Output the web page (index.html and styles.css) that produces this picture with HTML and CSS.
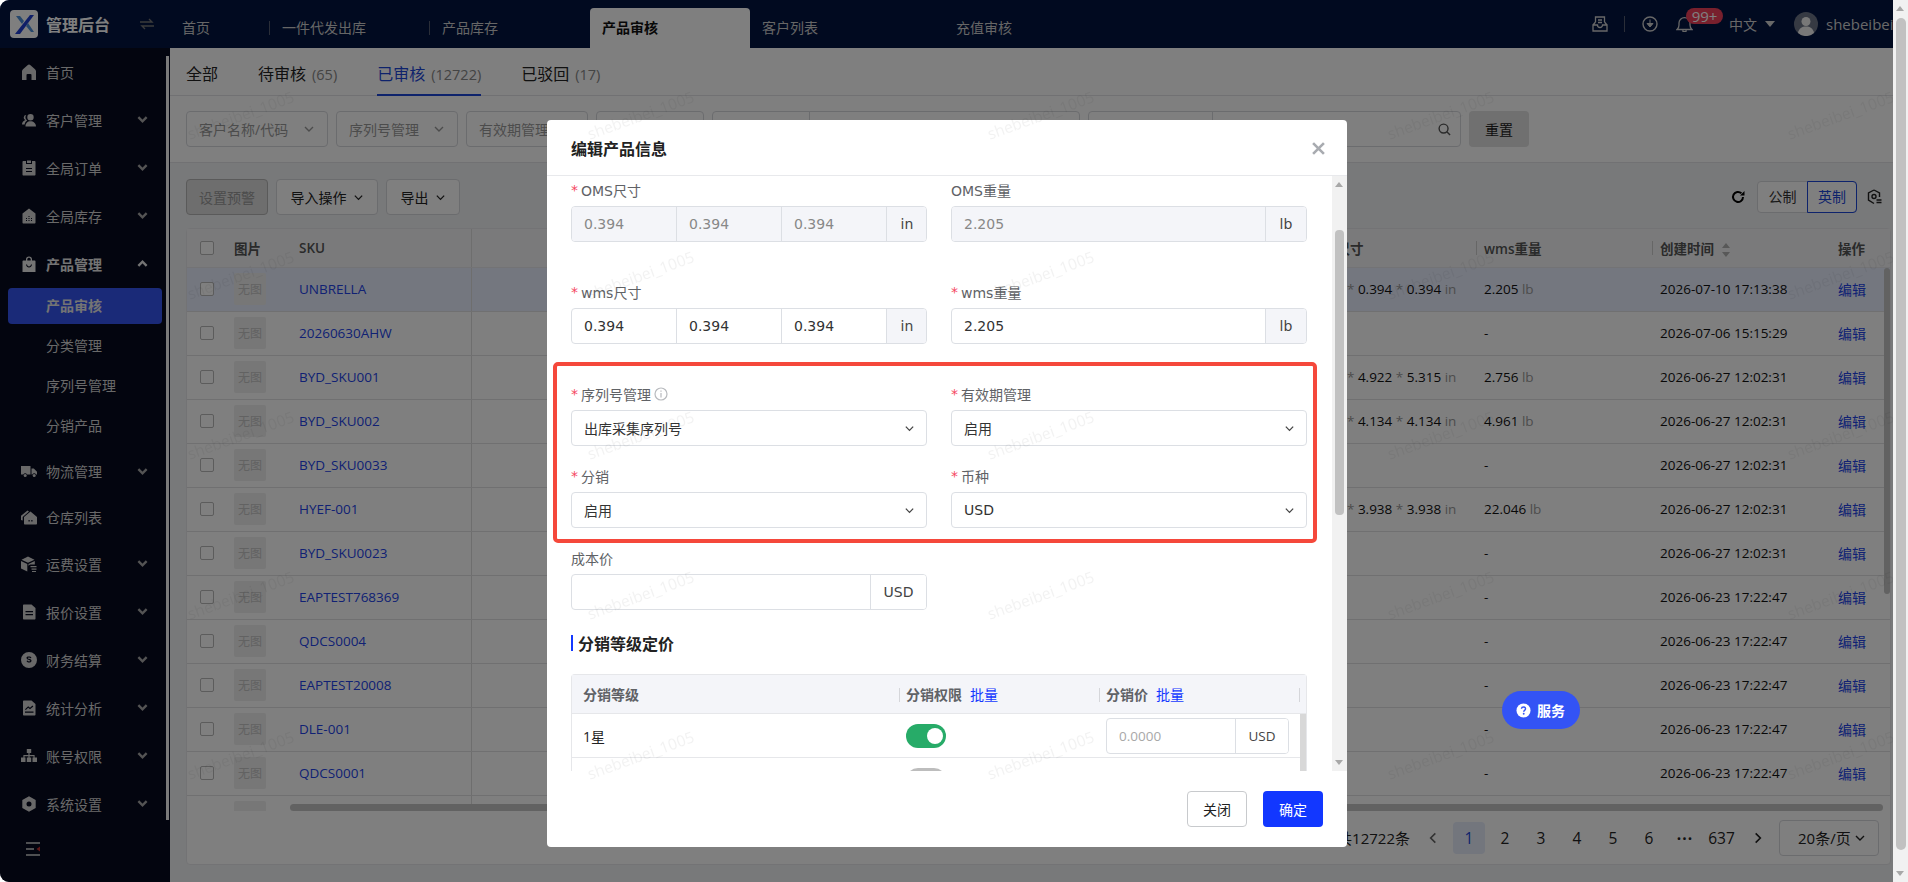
FILE: index.html
```html
<!DOCTYPE html>
<html lang="zh-CN">

<head>
    <meta charset="UTF-8">
    <meta name="viewport" content="width=device-width, initial-scale=1.0">
    <title>管理后台</title>
    <link rel="stylesheet" href="styles.css">
</head>

<body>
    <svg class="sprite" xmlns="http://www.w3.org/2000/svg">
        <symbol id="chev" viewBox="0 0 12 12"><path d="M2 4l4 4 4-4" fill="none" stroke="currentColor" stroke-width="1.4"/></symbol>
        <symbol id="chev-bold" viewBox="0 0 12 12"><path d="M1.5 3.5L6 8l4.5-4.5" fill="none" stroke="currentColor" stroke-width="2.6"/></symbol>
        <symbol id="i-home" viewBox="0 0 16 16"><path d="M8 .5c.5 0 1 .3 1.500.7l4.500 4c.6.5 1 1.200 1 2V16h-4.500v-5a1 1 0 0 0-1-1h-3a1 1 0 0 0-1 1v5H1V7.200c0-.8.4-1.500 1-2l4.500-4C7 .8 7.500.5 8 .5z"/></symbol>
        <symbol id="i-user" viewBox="0 0 16 16"><path d="M9.500 2a3.200 3.200 0 1 1 0 6.400 3.200 3.200 0 0 1 0-6.400zM4.500 14.500c0-3.200 2-5.200 5-5.200s5.500 2 5.500 5.200zM5.200 3a2.500 2.500 0 0 0-.7 4.900C2.300 8.600 1 10.300 1 12.500h2.600c.3-1.800 1.200-3.100 2.600-3.900A4.300 4.300 0 0 1 5.200 3z"/></symbol>
        <symbol id="i-order" viewBox="0 0 16 16"><path fill-rule="evenodd" d="M2.500 1H5v3h6V1h2.500c.6 0 1 .4 1 1v12.500c0 .6-.4 1-1 1h-11c-.6 0-1-.4-1-1V2c0-.6.4-1 1-1zM5 8v1h6V8zm0 3v1h6v-1zM6 .5h4V3H6z"/></symbol>
        <symbol id="i-stock" viewBox="0 0 16 16"><path fill-rule="evenodd" d="M8 .5l6.500 5v9c0 .6-.4 1-1 1h-11c-.6 0-1-.4-1-1v-9zM5 10v1h1v-1zm2.500 0v1h1v-1zm2.500 0v1h1v-1zm-5 2v1h1v-1zm2.500 0v1h1v-1zm2.500 0v1h1v-1zM7.500 8v1h1V8z"/></symbol>
        <symbol id="i-bag" viewBox="0 0 16 16"><path fill-rule="evenodd" d="M5 4.500V3.200C5 1.600 6.300.5 8 .5s3 1.100 3 2.700v1.300h2.500c.6 0 1 .4 1 1V16h-13V5.500c0-.6.4-1 1-1zm1.300 0h3.400V3.200c0-.9-.8-1.500-1.700-1.500s-1.700.6-1.700 1.500zM5 8.500c.3 2 1.500 3 3 3s2.700-1 3-3h-1c-.3 1.300-1 2-2 2s-1.700-.7-2-2z"/></symbol>
        <symbol id="i-truck" viewBox="0 0 16 16"><path d="M0 3h9.500v8.500H6a2 2 0 0 0-3.600 0H0zM10.500 5.500h2.300L16 8.700v2.800h-1a2 2 0 0 0-3.600 0h-.9z"/><circle cx="4.200" cy="12.500" r="1.500"/><circle cx="13.200" cy="12.500" r="1.500"/></symbol>
        <symbol id="i-ware" viewBox="0 0 16 16"><path fill-rule="evenodd" d="M9.500 2.500L16 8v6.500c0 .6-.4 1-1 1H4c-.6 0-1-.4-1-1V8zM7.500 11v1.500h1.200V11zm2.800 0v1.500h1.200V11z"/><path d="M6.500 1.500L8 2.600 1.700 8v3.500L0 11V6.800z"/></symbol>
        <symbol id="i-box" viewBox="0 0 16 16"><path d="M7 .5l6.500 3.200-6.500 3L.5 3.700zM0 5l6.300 3v7.500L0 12.500zM13.800 5v3.500H9.500a2 2 0 0 0-2 1.500V8z"/><path d="M9.500 10h6v1.300h-6zM10.500 12.500h5v1.300h-5zM11 15h4v1h-4z"/></symbol>
        <symbol id="i-doc" viewBox="0 0 16 16"><path fill-rule="evenodd" d="M2 1.500c0-.6.4-1 1-1h7.500L14.500 4v10.500c0 .6-.4 1-1 1H3c-.6 0-1-.4-1-1zM4.500 7v1.200h7.500V7zm0 3v1.200h7.500V10z"/></symbol>
        <symbol id="i-coin" viewBox="0 0 16 16"><path fill-rule="evenodd" d="M8 0a8 8 0 1 1 0 16A8 8 0 0 1 8 0zM5.500 5.800C5.500 7 6.500 7.600 8 8c1 .3 1.200.5 1.200.8 0 .4-.5.600-1.200.6s-1.200-.3-1.400-.8L5.500 9c.3.900 1.100 1.500 2.500 1.500 1.700 0 2.500-.7 2.500-1.800S9.500 7.200 8 6.800c-.9-.2-1.200-.4-1.200-.8 0-.3.500-.5 1.200-.5s1.100.2 1.300.7l1.100-.3C10.100 5 9.300 4.500 8 4.500c-1.600 0-2.500.5-2.500 1.300z"/></symbol>
        <symbol id="i-chart" viewBox="0 0 16 16"><path fill-rule="evenodd" d="M2 1.500c0-.6.4-1 1-1h7.500L14.500 4v10.500c0 .6-.4 1-1 1H3c-.6 0-1-.4-1-1zM4 11.500v1.200h8.500v-1.200zm0-2.200l.8.8 2.400-2.300 1.800 1.500 3.300-2.900-.8-.9-2.500 2.200-1.800-1.500z"/></symbol>
        <symbol id="i-tree" viewBox="0 0 16 16"><path d="M5.800 1h4.400v4H8.600v2h5v2.500H16V14h-4.500V9.500h1V8.300H8.600v1.200h1.600V14H5.800V9.500h1.600V8.300H3.500v1.200h1V14H0V9.500h2.400V7h5V5H5.800z"/></symbol>
        <symbol id="i-gear" viewBox="0 0 16 16"><path fill-rule="evenodd" d="M8 .3l6.700 3.800v7.800L8 15.700l-6.700-3.800V4.100zM8 5.500a2.500 2.500 0 1 0 0 5 2.500 2.500 0 0 0 0-5z"/></symbol>
    </svg>

    <div class="app">
        <header class="topbar">
            <div class="brand">
                <svg class="logo" viewBox="0 0 28 28">
                    <rect width="28" height="28" rx="4" fill="#fff"/>
                    <path d="M5 24L20 5h4L10 24z" fill="#1f3fd0"/>
                    <path d="M6 6h4l4 5-2 3z" fill="#4d8fd8"/>
                    <path d="M16 16l2-3 6 9h-3z" fill="#4d8fd8"/>
                </svg>
                <span class="brand-name">管理后台</span>
                <svg class="swap" viewBox="0 0 14 12"><path d="M0 4h12L9 1M14 8H2l3 3" fill="none" stroke="currentColor" stroke-width="1.400"/></svg>
            </div>
            <nav class="tabs">
                <a class="tab tab-s">首页</a>
                <a class="tab">一件代发出库</a>
                <a class="tab">产品库存</a>
                <a class="tab active">产品审核</a>
                <a class="tab tab-l">客户列表</a>
                <a class="tab">充值审核</a>
            </nav>
            <div class="top-right">
                <svg class="ti" viewBox="0 0 16 16"><path d="M3.500 6V1h9v5M1 9v6h14V9h-4.500a2.500 2.500 0 0 1-5 0zM1 9l2.500-3M15 9l-2.500-3M6 4h4M6 6.500h4" fill="none" stroke="currentColor" stroke-width="1.300"/></svg>
                <i class="top-sep"></i>
                <svg class="ti ti-dl" viewBox="0 0 16 16"><circle cx="8" cy="8" r="7" fill="none" stroke="currentColor" stroke-width="1.400"/><path d="M8 3.500v5.500M5 7.500l3 3.500 3-3.500z" fill="currentColor" stroke="currentColor"/></svg>
                <span class="bell">
                    <svg class="ti" viewBox="0 0 17 16"><path d="M1 13.500h15c-1.500-1-2-2.500-2-4.500V7c0-3-2.400-5.300-5.500-5.300S3 4 3 7v2c0 2-.5 3.500-2 4.500zM6.500 14.500c.3 1 1 1.200 2 1.200s1.700-.2 2-1.200" fill="none" stroke="currentColor" stroke-width="1.300"/></svg>
                    <b class="badge">99+</b>
                </span>
                <span class="lang">中文</span>
                <i class="caret"></i>
                <svg class="avatar" viewBox="0 0 24 24">
                    <circle cx="12" cy="12" r="12" fill="#6c7486"/>
                    <circle cx="12" cy="9.500" r="4.500" fill="#f0f0f0"/>
                    <path d="M4 21c1-5 4-6.500 8-6.500s7 1.500 8 6.500a12 12 0 0 1-16 0z" fill="#f0f0f0"/>
                </svg>
                <span class="uname">shebeibei</span>
            </div>
        </header>

        <div class="layout">
            <aside class="sidebar">
                <a class="side-item"><svg class="si"><use href="#i-home"/></svg>首页</a>
                <a class="side-item"><svg class="si"><use href="#i-user"/></svg>客户管理<svg class="sc"><use href="#chev-bold"/></svg></a>
                <a class="side-item"><svg class="si"><use href="#i-order"/></svg>全局订单<svg class="sc"><use href="#chev-bold"/></svg></a>
                <a class="side-item"><svg class="si"><use href="#i-stock"/></svg>全局库存<svg class="sc"><use href="#chev-bold"/></svg></a>
                <a class="side-item open"><svg class="si"><use href="#i-bag"/></svg>产品管理<svg class="sc up"><use href="#chev-bold"/></svg></a>
                <div class="side-sub">
                    <a class="sub-item active">产品审核</a>
                    <a class="sub-item">分类管理</a>
                    <a class="sub-item">序列号管理</a>
                    <a class="sub-item">分销产品</a>
                </div>
                <a class="side-item short"><svg class="si"><use href="#i-truck"/></svg>物流管理<svg class="sc"><use href="#chev-bold"/></svg></a>
                <a class="side-item short"><svg class="si"><use href="#i-ware"/></svg>仓库列表</a>
                <a class="side-item"><svg class="si"><use href="#i-box"/></svg>运费设置<svg class="sc"><use href="#chev-bold"/></svg></a>
                <a class="side-item"><svg class="si"><use href="#i-doc"/></svg>报价设置<svg class="sc"><use href="#chev-bold"/></svg></a>
                <a class="side-item"><svg class="si"><use href="#i-coin"/></svg>财务结算<svg class="sc"><use href="#chev-bold"/></svg></a>
                <a class="side-item"><svg class="si"><use href="#i-chart"/></svg>统计分析<svg class="sc"><use href="#chev-bold"/></svg></a>
                <a class="side-item"><svg class="si"><use href="#i-tree"/></svg>账号权限<svg class="sc"><use href="#chev-bold"/></svg></a>
                <a class="side-item"><svg class="si"><use href="#i-gear"/></svg>系统设置<svg class="sc"><use href="#chev-bold"/></svg></a>
                <svg class="collapse" viewBox="0 0 14 14"><path d="M0 1h14M0 13h14M0 7h8" stroke="currentColor" stroke-width="1.400"/><path d="M14 4.500v5L10.500 7z" fill="#c03030"/></svg>
                <i class="side-thumb"></i>
            </aside>

            <main class="main">
                <div class="status-tabs">
                    <a class="st">全部</a>
                    <a class="st">待审核<small>(65)</small></a>
                    <a class="st active">已审核<small>(12722)</small></a>
                    <a class="st">已驳回<small>(17)</small></a>
                </div>

                <div class="filters">
                    <div class="fld f1">客户名称/代码<svg class="ch"><use href="#chev"/></svg></div>
                    <div class="fld f2">序列号管理<svg class="ch"><use href="#chev"/></svg></div>
                    <div class="fld f2">有效期管理<svg class="ch"><use href="#chev"/></svg></div>
                    <div class="fld f3"></div>
                    <div class="fld f4"><i class="fld-cut c1"></i></div>
                    <div class="fld f5"><i class="fld-cut c2"></i>
                        <svg class="search" viewBox="0 0 14 14"><circle cx="6" cy="6" r="4.800" fill="none" stroke="currentColor" stroke-width="1.500"/><path d="M9.500 9.500L13 13" stroke="currentColor" stroke-width="1.500"/></svg>
                    </div>
                    <button class="btn reset">重置</button>
                </div>

                <div class="toolbar">
                    <button class="btn warn">设置预警</button>
                    <button class="btn b-imp">导入操作<svg class="ch"><use href="#chev"/></svg></button>
                    <button class="btn b-exp">导出<svg class="ch"><use href="#chev"/></svg></button>
                    <svg class="refresh" viewBox="0 0 14 14"><path d="M12 7a5 5 0 1 1-1.600-3.700" fill="none" stroke="currentColor" stroke-width="2"/><path d="M13.500 1v4.500H9z"/></svg>
                    <div class="unit">
                        <span>公制</span>
                        <span class="on">英制</span>
                    </div>
                    <svg class="cfg" viewBox="0 0 15 16"><path d="M7 1l5.500 3v4M7 1L1.500 4v7L7 14.500" fill="none" stroke="currentColor" stroke-width="1.400"/><circle cx="7" cy="7.500" r="2" fill="none" stroke="currentColor" stroke-width="1.400"/><path d="M9.500 11h5M9.500 13.500h5" stroke="currentColor" stroke-width="1.400"/></svg>
                </div>

                <section class="grid-card">
                    <div class="grid-scroll">
                        <table class="grid">
                            <colgroup>
                                <col class="c-check"><col class="c-img"><col class="c-sku"><col class="c-a"><col class="c-b"><col class="c-size"><col class="c-wt"><col class="c-date"><col>
                            </colgroup>
                            <thead>
                                <tr>
                                    <th><i class="cb"></i></th>
                                    <th>图片</th>
                                    <th class="fix-end">SKU</th>
                                    <th><i class="th-sep"></i></th>
                                    <th></th>
                                    <th>wms尺寸</th>
                                    <th class="sep">wms重量</th>
                                    <th class="sep">创建时间<svg class="sort" viewBox="0 0 8 14"><path d="M4 0l4 5H0zM4 14L0 9h8z"/></svg></th>
                                    <th>操作</th>
                                </tr>
                            </thead>
                            <tbody>
                                <tr class="hl"><td><i class="cb"></i></td><td><i class="noimg">无图</i></td><td class="fix-end"><a>UNBRELLA</a></td><td></td><td></td><td class="size">0.394 <u>*</u> 0.394 <u>*</u> 0.394 <u>in</u></td><td>2.205 <u>lb</u></td><td>2026-07-10 17:13:38</td><td><a class="edit">编辑</a></td></tr>
                                <tr><td><i class="cb"></i></td><td><i class="noimg">无图</i></td><td class="fix-end"><a>20260630AHW</a></td><td></td><td></td><td></td><td>-</td><td>2026-07-06 15:15:29</td><td><a class="edit">编辑</a></td></tr>
                                <tr><td><i class="cb"></i></td><td><i class="noimg">无图</i></td><td class="fix-end"><a>BYD_SKU001</a></td><td></td><td></td><td class="size">4.922 <u>*</u> 4.922 <u>*</u> 5.315 <u>in</u></td><td>2.756 <u>lb</u></td><td>2026-06-27 12:02:31</td><td><a class="edit">编辑</a></td></tr>
                                <tr><td><i class="cb"></i></td><td><i class="noimg">无图</i></td><td class="fix-end"><a>BYD_SKU002</a></td><td></td><td></td><td class="size">4.134 <u>*</u> 4.134 <u>*</u> 4.134 <u>in</u></td><td>4.961 <u>lb</u></td><td>2026-06-27 12:02:31</td><td><a class="edit">编辑</a></td></tr>
                                <tr><td><i class="cb"></i></td><td><i class="noimg">无图</i></td><td class="fix-end"><a>BYD_SKU0033</a></td><td></td><td></td><td></td><td>-</td><td>2026-06-27 12:02:31</td><td><a class="edit">编辑</a></td></tr>
                                <tr><td><i class="cb"></i></td><td><i class="noimg">无图</i></td><td class="fix-end"><a>HYEF-001</a></td><td></td><td></td><td class="size">3.938 <u>*</u> 3.938 <u>*</u> 3.938 <u>in</u></td><td>22.046 <u>lb</u></td><td>2026-06-27 12:02:31</td><td><a class="edit">编辑</a></td></tr>
                                <tr><td><i class="cb"></i></td><td><i class="noimg">无图</i></td><td class="fix-end"><a>BYD_SKU0023</a></td><td></td><td></td><td></td><td>-</td><td>2026-06-27 12:02:31</td><td><a class="edit">编辑</a></td></tr>
                                <tr><td><i class="cb"></i></td><td><i class="noimg">无图</i></td><td class="fix-end"><a>EAPTEST768369</a></td><td></td><td></td><td></td><td>-</td><td>2026-06-23 17:22:47</td><td><a class="edit">编辑</a></td></tr>
                                <tr><td><i class="cb"></i></td><td><i class="noimg">无图</i></td><td class="fix-end"><a>QDCS0004</a></td><td></td><td></td><td></td><td>-</td><td>2026-06-23 17:22:47</td><td><a class="edit">编辑</a></td></tr>
                                <tr><td><i class="cb"></i></td><td><i class="noimg">无图</i></td><td class="fix-end"><a>EAPTEST20008</a></td><td></td><td></td><td></td><td>-</td><td>2026-06-23 17:22:47</td><td><a class="edit">编辑</a></td></tr>
                                <tr><td><i class="cb"></i></td><td><i class="noimg">无图</i></td><td class="fix-end"><a>DLE-001</a></td><td></td><td></td><td></td><td>-</td><td>2026-06-23 17:22:47</td><td><a class="edit">编辑</a></td></tr>
                                <tr><td><i class="cb"></i></td><td><i class="noimg">无图</i></td><td class="fix-end"><a>QDCS0001</a></td><td></td><td></td><td></td><td>-</td><td>2026-06-23 17:22:47</td><td><a class="edit">编辑</a></td></tr>
                                <tr><td></td><td><i class="noimg"></i></td><td class="fix-end"></td><td></td><td></td><td></td><td></td><td></td><td></td></tr>
                            </tbody>
                        </table>
                        <i class="bar-h"></i>
                        <i class="bar-v"></i>
                    </div>
                    <div class="pager">
                        <span class="total">共12722条</span>
                        <a class="pg"><svg class="arrow"><use href="#chev"/></svg></a>
                        <a class="pg cur">1</a>
                        <a class="pg">2</a>
                        <a class="pg">3</a>
                        <a class="pg">4</a>
                        <a class="pg">5</a>
                        <a class="pg">6</a>
                        <a class="pg dots">···</a>
                        <a class="pg pg-w">637</a>
                        <a class="pg"><svg class="arrow next"><use href="#chev"/></svg></a>
                        <div class="size-sel">20条/页<svg class="ch"><use href="#chev"/></svg></div>
                    </div>
                </section>
            </main>
        </div>

        <div class="mask"></div>

        <a class="service">
            <svg class="service-i" viewBox="0 0 16 16"><circle cx="8" cy="8" r="7.500" fill="#fff"/><path d="M5.800 6.200C5.900 5 6.800 4.300 8 4.300c1.300 0 2.200.8 2.200 1.900 0 1.700-2 1.700-2 3.200" fill="none" stroke="#3353f5" stroke-width="1.500"/><circle cx="8.200" cy="11.500" r="1" fill="#3353f5"/></svg>
            服务
        </a>

        <div class="modal">
            <div class="modal-head">
                <h3>编辑产品信息</h3>
                <svg class="close" viewBox="0 0 12 12"><path d="M1 1l10 10M11 1L1 11" stroke="currentColor" stroke-width="2.400"/></svg>
            </div>
            <div class="modal-body">
                <div class="form">
                    <div class="form-row wide">
                        <div class="field">
                            <label><em>*</em>OMS尺寸</label>
                            <div class="ig off"><span class="v">0.394</span><span class="v">0.394</span><span class="v">0.394</span><span class="add">in</span></div>
                        </div>
                        <div class="field">
                            <label>OMS重量</label>
                            <div class="ig off"><span class="v grow">2.205</span><span class="add">lb</span></div>
                        </div>
                    </div>
                    <div class="form-row wide">
                        <div class="field">
                            <label><em>*</em>wms尺寸</label>
                            <div class="ig"><span class="v">0.394</span><span class="v">0.394</span><span class="v">0.394</span><span class="add">in</span></div>
                        </div>
                        <div class="field">
                            <label><em>*</em>wms重量</label>
                            <div class="ig"><span class="v grow">2.205</span><span class="add">lb</span></div>
                        </div>
                    </div>
                    <div class="form-row">
                        <div class="field">
                            <label><em>*</em>序列号管理<svg class="tip" viewBox="0 0 14 14"><circle cx="7" cy="7" r="6" fill="none" stroke="currentColor" stroke-width="1.200"/><path d="M7 6v4.500M7 3.500v1.300" stroke="currentColor" stroke-width="1.200"/></svg></label>
                            <div class="sel">出库采集序列号<svg class="ch"><use href="#chev"/></svg></div>
                        </div>
                        <div class="field">
                            <label><em>*</em>有效期管理</label>
                            <div class="sel">启用<svg class="ch"><use href="#chev"/></svg></div>
                        </div>
                    </div>
                    <div class="form-row">
                        <div class="field">
                            <label><em>*</em>分销</label>
                            <div class="sel">启用<svg class="ch"><use href="#chev"/></svg></div>
                        </div>
                        <div class="field">
                            <label><em>*</em>币种</label>
                            <div class="sel">USD<svg class="ch"><use href="#chev"/></svg></div>
                        </div>
                    </div>
                    <div class="form-row">
                        <div class="field">
                            <label>成本价</label>
                            <div class="ig"><span class="v grow"></span><span class="add plain">USD</span></div>
                        </div>
                    </div>

                    <h4 class="sec">分销等级定价</h4>

                    <div class="lvl">
                        <div class="lvl-head">
                            <span class="lc1">分销等级</span>
                            <span class="lc2">分销权限<a>批量</a></span>
                            <span class="lc3">分销价<a>批量</a></span>
                        </div>
                        <div class="lvl-row">
                            <span class="lc1">1星</span>
                            <span class="lc2"><i class="sw on"></i></span>
                            <span class="lc3">
                                <span class="ig ig-s"><span class="v grow ph">0.0000</span><span class="add plain">USD</span></span>
                            </span>
                        </div>
                        <div class="lvl-row">
                            <span class="lc1"></span>
                            <span class="lc2"><i class="sw"></i></span>
                            <span class="lc3"></span>
                        </div>
                        <i class="lvl-thumb"></i>
                    </div>
                </div>
                <div class="mb-scroll">
                    <i class="up-a"></i>
                    <i class="mb-thumb"></i>
                    <i class="down-a"></i>
                </div>
            </div>
            <div class="modal-foot">
                <button class="mbtn">关闭</button>
                <button class="mbtn primary">确定</button>
            </div>
            <div class="mark-box"></div>
        </div>

        <svg class="watermark" xmlns="http://www.w3.org/2000/svg">
            <defs>
                <pattern id="wm" width="400" height="160" patternUnits="userSpaceOnUse">
                    <text x="241" y="121" text-anchor="middle" transform="rotate(-20 241 116)">shebeibei_1005</text>
                </pattern>
            </defs>
            <rect width="100%" height="100%" fill="url(#wm)"/>
        </svg>
    </div>

    <div class="page-scroll">
        <i class="up-a"></i>
        <i class="page-thumb"></i>
        <i class="down-a"></i>
    </div>
</body>

</html>
```

FILE: styles.css
```css
html {
    box-sizing: border-box;
    font-family: "Open Sans", "Noto Sans CJK SC", sans-serif;
    font-size: 14px;
    background: #fff;
}

*,
*:before,
*:after {
    box-sizing: inherit;
}

body {
    margin: 0;
    height: 882px;
    display: flex;
    overflow: hidden;
}

a {
    color: inherit;
    text-decoration: none;
}

i,
em {
    font-style: normal;
}

button {
    font: inherit;
    cursor: pointer;
}

.sprite {
    display: none;
}

.app {
    position: relative;
    width: 1893px;
    height: 882px;
    display: flex;
    flex-direction: column;
    overflow: hidden;
    border-radius: 9px 0 0 9px;
    background: #f1f2f4;
}

/* top bar */
.topbar {
    flex: none;
    height: 48px;
    display: flex;
    background: #021440;
    color: #d0d0d0;
}

.brand {
    flex: none;
    width: 170px;
    display: flex;
    align-items: center;
    padding-left: 10px;
}

.logo {
    width: 28px;
    height: 28px;
}

.brand-name {
    margin-left: 8px;
    font-size: 16px;
    font-weight: 700;
    color: #fff;
}

.swap {
    width: 14px;
    height: 12px;
    margin-left: 30px;
    color: #777;
}

.tabs {
    flex: 1;
    display: flex;
    align-self: flex-end;
    height: 40px;
}

.tab {
    position: relative;
    flex: none;
    width: 160px;
    padding-left: 12px;
    line-height: 40px;
    color: #ccc;
}

.tab:after {
    content: "";
    position: absolute;
    right: 0;
    top: 13px;
    height: 14px;
    width: 1px;
    background: #555d70;
}

.tab-s {
    width: 100px;
}

.tab-l {
    width: 194px;
}

.tab:nth-child(3):after,
.tab.active:after,
.tab-l:after,
.tab:last-child:after {
    display: none;
}

.tab.active {
    background: #fff;
    border-radius: 4px 4px 0 0;
    color: #111;
    font-weight: 700;
}

.top-right {
    flex: none;
    width: 301px;
    display: flex;
    align-items: center;
    overflow: hidden;
    white-space: nowrap;
}

.ti {
    flex: none;
    width: 16px;
    height: 16px;
    display: block;
}

.top-sep {
    flex: none;
    width: 1px;
    height: 16px;
    margin-left: 16px;
    background: #555d70;
}

.ti-dl {
    margin-left: 17px;
}

.bell {
    position: relative;
    flex: none;
    margin-left: 18px;
    width: 17px;
    height: 16px;
}

.bell .ti {
    width: 17px;
}

.badge {
    position: absolute;
    left: 10px;
    top: -8px;
    width: 37px;
    height: 16px;
    border-radius: 8px;
    background: #f0405a;
    color: #fff;
    font-size: 15px;
    font-weight: 400;
    line-height: 16px;
    text-align: center;
}

.lang {
    flex: none;
    margin-left: 36px;
}

.caret {
    flex: none;
    margin-left: 8px;
    border-left: 5px solid transparent;
    border-right: 5px solid transparent;
    border-top: 6px solid #d0d0d0;
}

.avatar {
    flex: none;
    width: 24px;
    height: 24px;
    margin-left: 19px;
}

.uname {
    flex: none;
    margin-left: 8px;
    font-size: 15px;
}

/* sidebar */
.layout {
    flex: 1;
    min-height: 0;
    display: flex;
}

.sidebar {
    position: relative;
    flex: none;
    width: 170px;
    background: #060a1e;
    color: #d2d2d2;
}

.side-item {
    position: relative;
    height: 48px;
    display: flex;
    align-items: center;
    padding-left: 21px;
}

.side-item.short {
    height: 46px;
}

.side-item.open {
    font-weight: 700;
    color: #e8e8e8;
}

.si {
    flex: none;
    width: 16px;
    height: 16px;
    margin-right: 9px;
    fill: currentColor;
}

.sc {
    position: absolute;
    left: 137px;
    top: 18px;
    width: 11px;
    height: 11px;
    color: #a8a8a8;
}

.sc.up {
    transform: rotate(180deg);
    color: #e8e8e8;
}

.side-sub {
    margin: -2px 0 2px;
}

.sub-item {
    display: block;
    height: 40px;
    line-height: 36px;
    margin: 0 8px 0;
    padding: 2px 0 2px 38px;
}

.sub-item.active {
    height: 36px;
    margin: 2px 8px;
    padding: 0 0 0 38px;
    border-radius: 4px;
    background: #3454f0;
    font-weight: 700;
    color: #e8e8e8;
}

.collapse {
    position: absolute;
    left: 26px;
    top: 794px;
    width: 14px;
    height: 14px;
}

.side-thumb {
    position: absolute;
    left: 166px;
    top: 8px;
    width: 3px;
    height: 764px;
    background: #f4f4f4;
}

/* main */
.main {
    flex: 1;
    min-width: 0;
    display: flex;
    flex-direction: column;
    padding-bottom: 17px;
}

.status-tabs {
    flex: none;
    height: 48px;
    display: flex;
    gap: 40px;
    padding: 0 16px;
    background: #fff;
    border-bottom: 1px solid #e2e3e6;
    font-size: 16px;
    color: #222;
}

.st {
    height: 48px;
    line-height: 48px;
    padding-top: 2px;
    border-bottom: 2px solid transparent;
}

.st small {
    margin-left: 6px;
    font-size: 14.5px;
    color: #888;
}

.st.active {
    color: #1c46d8;
    border-bottom-color: #1c46d8;
}

.st.active small {
    color: #888;
}

.filters {
    flex: none;
    display: flex;
    gap: 8px;
    padding: 15px 16px;
    background: #fff;
    border-bottom: 1px solid #e2e3e6;
}

.fld {
    position: relative;
    height: 36px;
    display: flex;
    align-items: center;
    justify-content: space-between;
    padding: 0 12px;
    border: 1px solid #d6d8dd;
    border-radius: 4px;
    background: #fff;
    color: #999;
}

.f1 {
    width: 142px;
}

.f2 {
    width: 122px;
}

.f3 {
    width: 108px;
}

.f4 {
    width: 368px;
}

.f5 {
    width: 373px;
}

.fld-cut {
    position: absolute;
    top: 0;
    bottom: 0;
    width: 1px;
    background: #d6d8dd;
}

.c1 {
    left: 96px;
}

.c2 {
    left: 123px;
}

.search {
    position: absolute;
    right: 9px;
    top: 11px;
    width: 13px;
    height: 13px;
    color: #555;
}

.ch {
    flex: none;
    width: 12px;
    height: 12px;
}

.btn {
    height: 36px;
    display: flex;
    align-items: center;
    justify-content: center;
    gap: 6px;
    padding: 0;
    border: 1px solid #d6d8dd;
    border-radius: 4px;
    background: #fff;
    color: #222;
}

.btn .ch {
    width: 11px;
    height: 11px;
}

.reset {
    width: 60px;
    border: 0;
    background: #e0e0e0;
}

.toolbar {
    flex: none;
    display: flex;
    align-items: center;
    gap: 8px;
    padding: 16px 11px 13px 16px;
}

.warn {
    width: 82px;
    background: #dcdcdc;
    border-color: #b4b4b4;
    color: #999;
}

.b-imp {
    width: 102px;
}

.b-exp {
    width: 74px;
}

.refresh {
    width: 14px;
    height: 14px;
    margin-left: auto;
    margin-right: 4px;
    color: #000;
}

.unit {
    display: flex;
    height: 32px;
    border: 1px solid #d6d8dd;
    border-radius: 4px;
    background: #fff;
    color: #333;
}

.unit span {
    width: 49px;
    line-height: 30px;
    text-align: center;
}

.unit .on {
    margin: -1px -1px -1px 0;
    width: 50px;
    line-height: 30px;
    border: 1px solid #1c46d8;
    border-radius: 0 4px 4px 0;
    color: #1c46d8;
}

.cfg {
    width: 15px;
    height: 16px;
    margin-left: 2px;
    color: #222;
}

.grid-card {
    flex: 1;
    min-height: 0;
    display: flex;
    flex-direction: column;
    margin: 0 2px 0 16px;
    border: 1px solid #e6e7ea;
    border-radius: 4px;
    background: #fff;
}

.grid-scroll {
    position: relative;
    flex: none;
    height: 582px;
    overflow: hidden;
}

.grid {
    width: 1703px;
    table-layout: fixed;
    border-collapse: collapse;
    font-size: 13.5px;
}

.c-check {
    width: 47px;
}

.c-img {
    width: 65px;
}

.c-sku {
    width: 172px;
}

.c-a {
    width: 70px;
}

.c-b {
    width: 757px;
}

.c-size {
    width: 178px;
}

.c-wt {
    width: 176px;
}

.c-date {
    width: 178px;
}

.grid th {
    position: relative;
    height: 38px;
    padding: 0 8px;
    text-align: left;
    font-weight: 600;
    font-size: 13.5px;
    color: #555;
    background: #f4f5f7;
    border-bottom: 1px solid #e6e7ea;
    white-space: nowrap;
}

.grid th:first-child,
.grid td:first-child {
    padding-left: 13px;
}

.grid th:nth-child(2),
.grid td:nth-child(2),
.grid th:nth-child(3),
.grid td:nth-child(3) {
    padding-left: 0;
}

.grid td {
    height: 44px;
    padding: 0 8px;
    border-bottom: 1px solid #e0e0e2;
    color: #111;
    white-space: nowrap;
}

.grid .fix-end {
    border-right: 1px solid #dcdcdc;
}

.grid a {
    color: #2243e8;
}

.edit {
    font-size: 14px;
}

.hl td {
    background: #e8eefe;
}

.grid .size {
    padding-left: 11px;
}

.grid u {
    text-decoration: none;
    color: #999;
}

.cb {
    display: block;
    width: 14px;
    height: 14px;
    border: 1px solid #b8b8b8;
    border-radius: 2px;
    background: #fff;
}

.noimg {
    display: flex;
    align-items: center;
    justify-content: center;
    width: 32px;
    height: 32px;
    border-radius: 2px;
    background: #eee;
    color: #c4c4c4;
    font-size: 12px;
}

.th-sep {
    display: block;
    width: 1px;
    height: 14px;
    margin-left: 61px;
    background: #ccc;
}

.sep:before {
    content: "";
    position: absolute;
    left: 0;
    top: 12px;
    height: 14px;
    width: 1px;
    background: #ccc;
}

.sort {
    width: 8px;
    height: 14px;
    margin-left: 8px;
    vertical-align: middle;
    fill: #b0b0b0;
}

.bar-h {
    position: absolute;
    left: 103px;
    right: 7px;
    bottom: 0;
    height: 7px;
    border-radius: 4px;
    background: #c4c4c4;
}

.bar-v {
    position: absolute;
    right: 0;
    top: 39px;
    width: 6px;
    height: 326px;
    border-radius: 3px;
    background: #c4c4c4;
}

.pager {
    flex: 1;
    display: flex;
    align-items: center;
    justify-content: flex-end;
    gap: 4px;
    padding-right: 11px;
    font-size: 15.5px;
    color: #222;
}

.total {
    margin-right: 3px;
    font-size: 15px;
}

.pg {
    width: 32px;
    height: 32px;
    display: flex;
    align-items: center;
    justify-content: center;
    border-radius: 4px;
}

.pg-w {
    width: 33px;
}

.dots {
    font-weight: 700;
    letter-spacing: 1px;
}

.pg.cur {
    background: #e6ecfb;
    color: #1c46d8;
}

.arrow {
    width: 14px;
    height: 14px;
    transform: rotate(90deg);
    color: #666;
}

.arrow.next {
    transform: rotate(-90deg);
    color: #222;
}

.size-sel {
    display: flex;
    align-items: center;
    justify-content: space-between;
    width: 100px;
    height: 36px;
    margin-left: 1px;
    padding: 0 12px 0 18px;
    border: 1px solid #d6d8dd;
    border-radius: 4px;
    font-size: 15px;
}

/* overlay layers */
.mask {
    position: absolute;
    inset: 0;
    z-index: 10;
    background: rgba(0, 0, 0, .5);
}

.service {
    position: absolute;
    z-index: 11;
    left: 1502px;
    top: 691px;
    width: 78px;
    height: 38px;
    display: flex;
    align-items: center;
    gap: 6px;
    padding-left: 14px;
    border-radius: 19px;
    background: #3353f5;
    color: #fff;
    font-weight: 700;
}

.service-i {
    width: 15px;
    height: 15px;
}

.modal {
    position: absolute;
    z-index: 20;
    left: 547px;
    top: 120px;
    width: 800px;
    height: 727px;
    display: flex;
    flex-direction: column;
    border-radius: 4px;
    background: #fff;
    font-family: "DejaVu Sans", "Noto Sans CJK SC", sans-serif;
}

.modal-head {
    flex: none;
    height: 56px;
    display: flex;
    align-items: center;
    justify-content: space-between;
    padding: 0 22px 0 24px;
    border-bottom: 1px solid #e8e9ec;
}

.modal-head h3 {
    margin: 0;
    font-size: 16px;
    font-family: "Noto Sans CJK SC", sans-serif;
    font-weight: 700;
    color: #222;
}

.close {
    width: 13px;
    height: 13px;
    margin-top: 2px;
    color: #a8abb0;
}

.modal-body {
    flex: none;
    height: 595px;
    display: flex;
}

.form {
    flex: none;
    width: 785px;
    height: 595px;
    padding: 5px 25px 0 24px;
    overflow: hidden;
}

.form-row {
    display: grid;
    grid-template-columns: 356px 356px;
    column-gap: 24px;
    margin-bottom: 21px;
}

.form-row.wide {
    margin-bottom: 41px;
}

.field label {
    display: flex;
    align-items: center;
    height: 20px;
    margin-bottom: 5px;
    padding-bottom: 2px;
    color: #606266;
    white-space: nowrap;
}

.field em {
    width: 10px;
    color: #f5475f;
}

.tip {
    width: 14px;
    height: 14px;
    margin-left: 3px;
    color: #b8babe;
}

.ig {
    display: flex;
    height: 36px;
    border: 1px solid #dcdfe4;
    border-radius: 4px;
    overflow: hidden;
}

.v {
    flex: none;
    width: 105px;
    padding-left: 12px;
    line-height: 34px;
    border-right: 1px solid #dcdfe4;
    color: #333;
}

.v.grow {
    flex: 1;
    min-width: 0;
}

.off .v {
    background: #f4f5f9;
    color: #888;
}

.add {
    flex: none;
    width: 40px;
    line-height: 34px;
    text-align: center;
    background: #f4f5f9;
    color: #444;
}

.add.plain {
    width: 55px;
    background: #fff;
}

.sel {
    height: 36px;
    display: flex;
    align-items: center;
    justify-content: space-between;
    padding: 0 11px 0 12px;
    border: 1px solid #dcdfe4;
    border-radius: 4px;
    color: #333;
}

.sel .ch {
    width: 11px;
    height: 11px;
    color: #444;
}

.sec {
    margin: 23px 0 21px;
    padding-left: 7px;
    height: 20px;
    line-height: 20px;
    font-family: "Noto Sans CJK SC", sans-serif;
    font-size: 16px;
    font-weight: 700;
    color: #222;
    background: linear-gradient(#1439ff, #1439ff) 0 2px / 2px 16px no-repeat;
}

.lvl {
    position: relative;
    width: 736px;
    border: 1px solid #e6e7ea;
    border-bottom: 0;
    border-radius: 4px 4px 0 0;
}

.lvl-head,
.lvl-row {
    display: flex;
    align-items: center;
}

.lvl-head {
    height: 39px;
    background: #f4f5f9;
    border-bottom: 1px solid #e6e7ea;
    font-family: "Noto Sans CJK SC", sans-serif;
    font-weight: 700;
    color: #606266;
}

.lvl-head a {
    margin-left: 8px;
    font-weight: 400;
    color: #1439ff;
}

.lvl-row {
    width: 728px;
    height: 44px;
    border-bottom: 1px solid #e6e7ea;
    font-family: "Open Sans", "Noto Sans CJK SC", sans-serif;
    color: #222;
}

.lc1 {
    width: 327px;
    padding-left: 11px;
}

.lc2,
.lc3 {
    position: relative;
    width: 200px;
    padding-left: 7px;
}

.lvl-head .lc2:before,
.lvl-head .lc3:before,
.lvl-head .lc3:after {
    content: "";
    position: absolute;
    left: 0;
    top: 4px;
    height: 14px;
    width: 1px;
    background: #d5d6da;
}

.lvl-head .lc3:after {
    left: 200px;
}

.sw {
    display: block;
    position: relative;
    width: 40px;
    height: 24px;
    border-radius: 12px;
    background: #bdbdbd;
}

.sw.on {
    background: #27ab68;
}

.sw.on:after {
    content: "";
    position: absolute;
    right: 3px;
    top: 4px;
    width: 16px;
    height: 16px;
    border-radius: 50%;
    background: #fff;
}

.ig-s {
    width: 183px;
    font-size: 13.5px;
}

.ig-s .add {
    width: 52px;
}

.ph {
    color: #a8a8a8;
}

.lvl-thumb {
    position: absolute;
    right: 0;
    top: 39px;
    width: 6px;
    height: 60px;
    background: #d8d8d8;
}

.mb-scroll,
.page-scroll {
    position: relative;
    flex: none;
    width: 15px;
    background: #f1f1f1;
}

.up-a,
.down-a {
    position: absolute;
    left: 3px;
    border-left: 4.5px solid transparent;
    border-right: 4.5px solid transparent;
}

.up-a {
    top: 6px;
    border-bottom: 5px solid #a8a8a8;
}

.down-a {
    bottom: 6px;
    border-top: 5px solid #a8a8a8;
}

.mb-scroll .mb-thumb {
    position: absolute;
    left: 3px;
    top: 54px;
    width: 9px;
    height: 285px;
    border-radius: 4px;
    background: #c1c1c1;
}

.modal-foot {
    flex: none;
    height: 76px;
    display: flex;
    justify-content: flex-end;
    gap: 16px;
    padding: 20px 24px 0 0;
    font-family: "Noto Sans CJK SC", sans-serif;
}

.mbtn {
    width: 60px;
    height: 36px;
    padding: 0;
    border: 1px solid #c8cacd;
    border-radius: 4px;
    background: #fff;
    color: #222;
}

.mbtn.primary {
    border: 0;
    background: #1237ff;
    color: #fff;
}

.mark-box {
    position: absolute;
    left: 6px;
    top: 242px;
    width: 764px;
    height: 181px;
    border: 4px solid #f5483b;
    border-radius: 5px;
}

.watermark {
    position: absolute;
    inset: 0;
    z-index: 30;
    width: 100%;
    height: 100%;
    pointer-events: none;
}

.watermark text {
    font-family: "Open Sans", sans-serif;
    font-size: 15.5px;
    fill: rgba(0, 0, 0, .05);
}

.page-thumb {
    position: absolute;
    left: 3px;
    top: 18px;
    width: 10px;
    height: 832px;
    border-radius: 5px;
    background: #c1c1c1;
}
```
